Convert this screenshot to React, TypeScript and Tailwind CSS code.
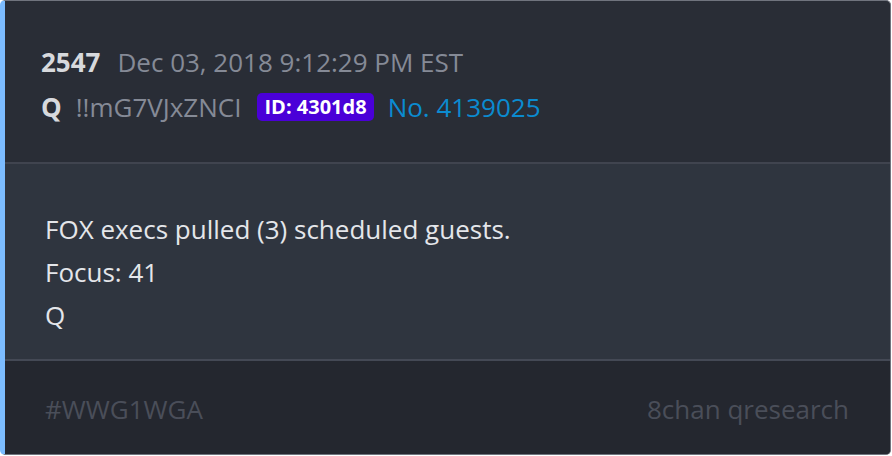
import React from "react";

const App = () => {
	return (
		<div className="w-[892px] h-[456px] bg-white" style={{ fontFamily: '"Open Sans", sans-serif' }}>
			<div className="w-[891px] h-[455px] flex flex-col overflow-hidden rounded-[5px] border border-[#70747e] border-l-[5px] border-l-[#7cbcff] bg-[#292d36]">
				{/* header */}
				<div className="h-[161px] shrink-0 flex flex-col pl-[36px] pt-[47px] gap-[17px]">
					<div className="flex items-baseline gap-[17px] leading-[28px]">
						<span className="text-[26px] font-bold text-[#d7d9dd]">2547</span>
						<span className="text-[26px] text-[#858a96]">Dec 03, 2018 9:12:29 PM EST</span>
					</div>
					<div className="flex items-center leading-[28px]">
						<span className="text-[26px] font-bold text-[#d7d9dd]">Q</span>
						<span className="ml-[14px] text-[26px] text-[#858a96]">!!mG7VJxZNCI</span>
						<span className="ml-[16px] h-[28px] px-[7px] rounded-[5px] bg-[#4a00d8] text-white text-[20px] font-bold flex items-center">
							ID: 4301d8
						</span>
						<span className="ml-[14px] text-[26px] text-[#0b8bd0]">No. 4139025</span>
					</div>
				</div>
				<div className="h-[2px] shrink-0 bg-[#40444f]" />
				{/* body */}
				<div className="h-[195px] shrink-0 bg-[#2f353f] pl-[40px] pt-[44px] flex flex-col text-[26px] leading-[43px] text-[#e4e6ea]">
					<p>FOX execs pulled (3) scheduled guests.</p>
					<p>Focus: 41</p>
					<p>Q</p>
				</div>
				<div className="h-[2px] shrink-0 bg-[#444955]" />
				{/* footer */}
				<div className="flex-1 bg-[#24272f] flex items-center justify-between pl-[40px] pr-[41px] pt-[3px] text-[26px] leading-[28px] text-[#4a4e59]">
					<span>#WWG1WGA</span>
					<span>8chan qresearch</span>
				</div>
			</div>
		</div>
	);
};

export default App;
